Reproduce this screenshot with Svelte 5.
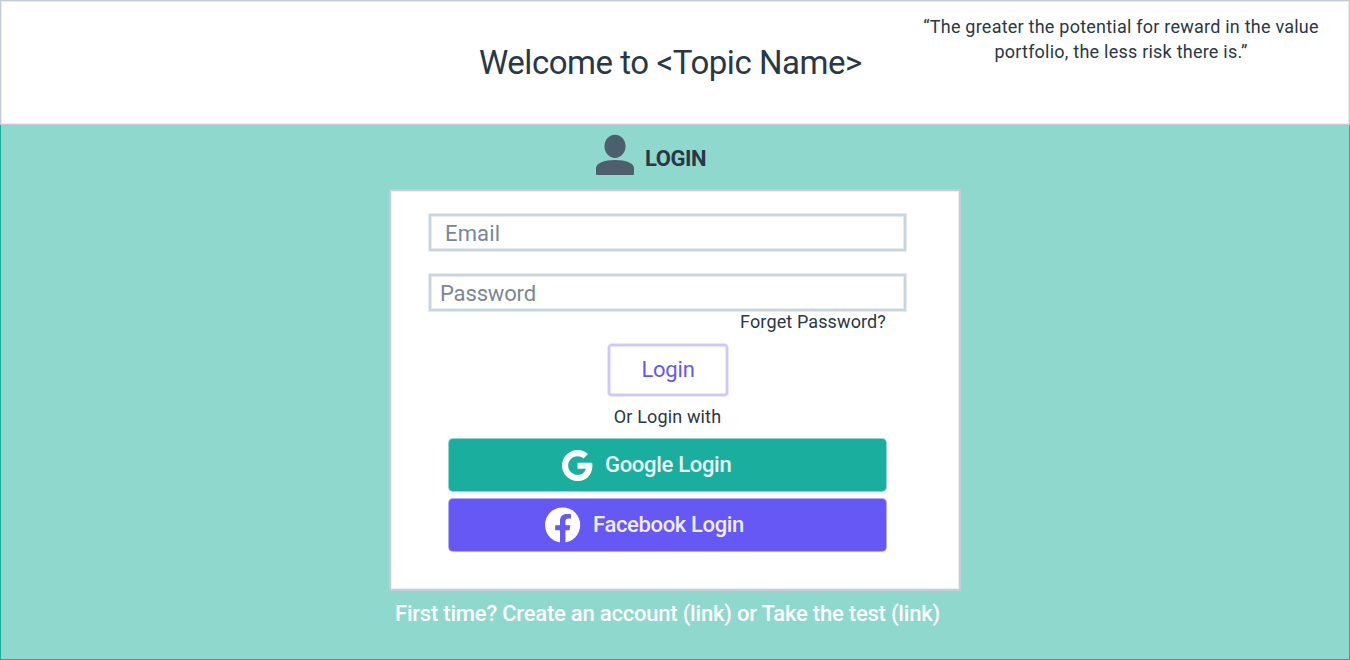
<script>
  let email = $state('');
  let password = $state('');
</script>

<div class="page">
  <header>
    <h1>Welcome to &lt;Topic Name&gt;</h1>
    <blockquote>“The greater the potential for reward in the value<br />portfolio, the less risk there is.”</blockquote>
  </header>

  <main>
    <div class="title">
      <svg width="38" height="42" viewBox="0 0 38 42" aria-hidden="true">
        <ellipse cx="19" cy="12.3" rx="10.5" ry="11.6" />
        <path d="M0 40V34.5C0 29 8 26 19 26S38 29 38 34.5V40Q38 41 37 41H1Q0 41 0 40Z" />
      </svg>
      <h2>LOGIN</h2>
    </div>

    <section class="panel">
      <form onsubmit={(e) => e.preventDefault()}>
        <input class="email" type="text" placeholder="Email" bind:value={email} />
        <input class="password" type="password" placeholder="Password" bind:value={password} />
        <span class="forget">Forget Password?</span>
        <button class="login">Login</button>
        <span class="or">Or Login with</span>
        <button class="social google" type="button">
          <svg width="31" height="31" viewBox="5 5 22 22" aria-hidden="true">
            <path fill="#fff" d="M16 14.06V18.27H21.99C21.21 20.81 19.08 22.64 16 22.64C12.34 22.64 9.37 19.66 9.37 16S12.34 9.36 16 9.36C17.65 9.36 19.16 9.97 20.32 10.96L23.41 7.87C21.46 6.09 18.86 5 16 5C9.93 5 5 9.93 5 16S9.93 27 16 27C25.24 27 27.28 18.36 26.37 14.08Z" />
          </svg>
          <span>Google Login</span>
        </button>
        <button class="social facebook" type="button">
          <svg width="36" height="36" viewBox="0 0 36 36" aria-hidden="true">
            <circle cx="17.6" cy="18" r="17.6" fill="#fff" />
            <path fill="#6558f5" d="M15 36V23.2H10.2V18.2H15V14.2C15 9.4 17.6 7 22 7C23.6 7 25 7.1 26 7.3V11.6H23.6C21.2 11.6 20.4 12.8 20.4 14.6V18.2H25.3L24.5 23.2H20.4V36Z" />
          </svg>
          <span>Facebook Login</span>
        </button>
      </form>
    </section>

    <p class="signup">First time? Create an account (link) or Take the test (link)</p>
  </main>
</div>

<style>
  :global(body) { margin: 0; }
  .page, .page * { box-sizing: border-box; }
  .page {
    width: 1350px;
    height: 660px;
    display: flex;
    flex-direction: column;
    overflow: hidden;
    font-family: Roboto, "Liberation Sans", sans-serif;
    color: #293845;
  }
  h1, h2, p, blockquote { margin: 0; font-weight: 400; }
  header {
    height: 125px;
    flex: none;
    display: grid;
    grid-template-columns: 409px 1fr;
    padding-left: 478px;
    background: #fff;
    border: 1px solid #c1cdd8;
    box-shadow: inset 0 0 0 1px #e9edf1;
  }
  h1 {
    padding-top: 42px;
    font-size: 33px;
    line-height: 40px;
    letter-spacing: -0.46px;
    white-space: nowrap;
  }
  blockquote {
    padding: 13px 0 0 6px;
    width: 460px;
    font-size: 18px;
    line-height: 25px;
    letter-spacing: 0.23px;
    text-align: center;
    white-space: nowrap;
  }
  main {
    flex: 1;
    display: flex;
    flex-direction: column;
    align-items: center;
    background: #8ed8ce;
    border: 1px solid #1aae9f;
    border-top: 0;
  }
  .title {
    width: 572px;
    height: 64px;
    flex: none;
    display: flex;
    padding: 9px 0 0 207px;
  }
  .title svg { fill: #4d5e6d; }
  h2 {
    margin-left: 11px;
    font-size: 22px;
    font-weight: 700;
    line-height: 50px;
    letter-spacing: -0.45px;
  }
  .panel {
    width: 572px;
    height: 402px;
    flex: none;
    padding: 23px 53px 0 38px;
    background: #fff;
    border: 2px solid #c1ced8;
    box-shadow: inset 0 0 0 1px #edf0f3;
  }
  form { display: flex; flex-direction: column; align-items: center; }
  input, button { font-family: inherit; font-size: 22px; outline: none; }
  input {
    width: 477px;
    height: 37px;
    padding: 2px 14px 0;
    border: 2px solid #c9d4dd;
    border-radius: 0;
    box-shadow: 0 0 0 1px #e6ebef, inset 0 0 0 1px #e6ebef;
    color: #293845;
    background: #fff;
    font-weight: 450;
  }
  input::placeholder { color: #788896; opacity: 1; }
  .email { letter-spacing: 0.15px; }
  .password { margin-top: 23px; padding-left: 9px; letter-spacing: -0.15px; }
  .forget {
    align-self: flex-end;
    margin-right: 20px;
    height: 33px;
    font-size: 18px;
    line-height: 21px;
    letter-spacing: 0.12px;
  }
  .login {
    width: 120px;
    height: 52px;
    padding: 0 0 2px 1px;
    background: #fff;
    border: 2px solid #cdc7fb;
    border-radius: 4px;
    box-shadow: 0 0 0 1px #e9e6fd, inset 0 0 0 1px #e9e6fd;
    color: #6558f5;
    letter-spacing: -0.2px;
  }
  .or {
    height: 43px;
    font-size: 18px;
    line-height: 42px;
    letter-spacing: 0.15px;
  }
  .social {
    width: 437px;
    height: 52px;
    display: flex;
    align-items: center;
    border: 0;
    border-radius: 4px;
    color: #edf9f8;
    font-weight: 500;
    text-align: left;
  }
  .social svg { flex: none; }
  .social span { line-height: 26px; }
  .google {
    gap: 12px;
    padding: 0 0 0 113px;
    background: #1aae9f;
    box-shadow: 0 0 0 1px #1aae9f80;
    letter-spacing: -0.3px;
  }
  .facebook {
    gap: 12px;
    margin-top: 8px;
    padding: 0 0 0 96px;
    background: #6558f5;
    box-shadow: 0 0 0 1px #6558f580;
    color: #f0eefe;
    letter-spacing: -0.35px;
  }
  .signup {
    width: 572px;
    padding-left: 6px;
    color: #fff;
    font-size: 22px;
    font-weight: 500;
    line-height: 45px;
    letter-spacing: -0.21px;
    white-space: nowrap;
  }
</style>
